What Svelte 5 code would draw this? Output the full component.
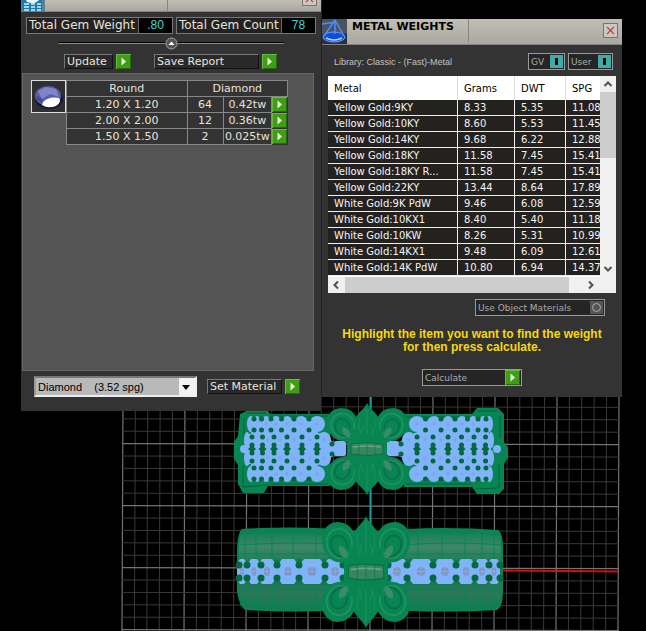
<script>
  const gems = [
    ['1.20 X 1.20', '64', '0.42tw'],
    ['2.00 X 2.00', '12', '0.36tw'],
    ['1.50 X 1.50', '2', '0.025tw']
  ];
  const metals = [
    ['Yellow Gold:9KY', '8.33', '5.35', '11.08'],
    ['Yellow Gold:10KY', '8.60', '5.53', '11.45'],
    ['Yellow Gold:14KY', '9.68', '6.22', '12.88'],
    ['Yellow Gold:18KY', '11.58', '7.45', '15.41'],
    ['Yellow Gold:18KY R...', '11.58', '7.45', '15.41'],
    ['Yellow Gold:22KY', '13.44', '8.64', '17.89'],
    ['White Gold:9K PdW', '9.46', '6.08', '12.59'],
    ['White Gold:10KX1', '8.40', '5.40', '11.18'],
    ['White Gold:10KW', '8.26', '5.31', '10.99'],
    ['White Gold:14KX1', '9.48', '6.09', '12.61'],
    ['White Gold:14K PdW', '10.80', '6.94', '14.37']
  ];

  // construction grid: five minor cells for each major one
  const cols = Array.from({ length: 41 }, (_, i) => ({ at: 123 + i * 12.4, major: i % 5 === 0 }));
  const rows = Array.from({ length: 20 }, (_, i) => ({ at: 394 + i * 12.4, major: i % 5 === 4 }));

  // pave ring: outer and inner stone rows, from the ring's edge to its centre
  const sides = [
    { outer: [251, 257, 266, 276, 287, 301, 317], inner: [247, 257, 268, 280, 294, 310, 324], tip: 340, end: 244 },
    { outer: [489, 483, 473, 462, 448, 434, 417], inner: [491, 480, 468, 455, 441, 425, 409], tip: 393, end: 497 }
  ];
  const rad = [4, 4, 5, 6, 6, 7, 8];
  const mids = (a) => a.slice(1).map((x, i) => (x + a[i]) / 2);

  // single row ring: centre and half width of each stone
  const band = [
    [242, 5], [254, 6], [267, 8], [288, 9], [312, 11], [335, 10],
    [397, 10], [421, 11], [445, 10], [466, 8], [482, 7], [494, 6]
  ];
  const prongs = [239, 247, 261, 277, 299, 325, 343, 388, 407, 433, 456, 475, 489, 500];
</script>

{#snippet arrow()}
  <span class="go"><svg width="15" height="15" viewBox="0 0 15 15" aria-hidden="true"><path d="M5.500 3.500 10 7.500 5.500 11.500z" fill="#e9ffd8" /></svg></span>
{/snippet}

{#snippet cross()}
  <svg width="11" height="11" viewBox="0 0 11 11" aria-hidden="true"><path d="M2 2l7 7M9 2l-7 7" stroke="#b04a42" stroke-width="1.2" /></svg>
{/snippet}

{#snippet fleur()}
  <g fill="#078553">
    <path d="M-20-8L-17-22L-11-32H11L17-22L20-8V8L17 22L11 32H-11L-17 22L-20 8Z" />
    {#each [1, -1] as sx}
      {#each [1, -1] as sy}
        <g transform="scale({sx} {sy})">
          <path d="M-4-4C-8-8-10-14-10-30C-13-38-19-41-27-41C-36-40-41-33-40-24C-39-15-32-8-24-8L-20-7Z" />
          <path d="M0-46C-3-39-10-37-13-28L-12-14L0-8Z" />
          <path d="M-13-20C-11-30-19-37-28-35C-37-32-38-22-32-15C-27-10-18-10-16-16" fill="none" stroke="#24945f" stroke-width="1.500" />
          <path d="M-17-20C-17-27-23-32-29-29C-33-26-33-20-29-16C-26-13-22-12-19-13" fill="none" stroke="#0b6e48" stroke-width="1.500" />
          <path d="M-17-11C-16-18-20-21-24-22C-26-17-23-12-17-11Z" fill="#3a8b67" />
          <path d="M-7-31Q-10-24-5-15M-3-24L-7-14M0-41V-15" fill="none" stroke="#1f925f" stroke-width=".8" />
        </g>
      {/each}
    {/each}
    <path d="M-16-5Q0-8 16-5V5Q0 8-16 5Z" fill="#35875f" stroke="#087148" stroke-width="1" />
    <path d="M-14-2Q0-4 14-2" fill="none" stroke="#8fb5a1" stroke-width="1.500" opacity=".6" /><path d="M0-6V6M-8-6V6M8-6V6" stroke="#1c6f4b" stroke-width=".7" />
  </g>
{/snippet}

<main>
  <svg class="viewport" width="646" height="631" viewBox="0 0 646 631" aria-label="Ring models">
    <defs>
      <linearGradient id="band" x1="0" y1="0" x2="0" y2="1">
        <stop offset="0" stop-color="#087e50" /><stop offset=".22" stop-color="#3f8768" /><stop offset=".5" stop-color="#12764e" />
        <stop offset=".8" stop-color="#2f775a" /><stop offset="1" stop-color="#087e50" />
      </linearGradient>
    </defs>
    {#each cols as c}
      <line x1={c.at} x2={c.at - 1} y1="394" y2="631" stroke={c.major ? '#747474' : '#393939'} stroke-width={c.major ? 1.2 : 1} />
    {/each}
    {#each rows as r}
      <line x1="122" x2="619" y1={r.at} y2={r.at + 1} stroke={r.major ? '#747474' : '#393939'} stroke-width={r.major ? 1.2 : 1} />
    {/each}
    <path d="M370.500 394V528" stroke="#119c9f" stroke-width="2" />
    <path d="M500 570.500L618 571.500" stroke="#d01010" stroke-width="2" />

    <path d="M240 414L249 410H267L270 414H330V486H268L264 493H243L238 484V465L234 459V442L238 436ZM404 414H472L477 408H498L504 414V442L508 448V458L504 464V489L499 494H477L472 487H404Z" fill="#078552" />
    <path d="M244 418V436M243 465V487L268 485M500 416V438M499 464V488L475 489M247 413H266M477 411H498M270 416H328M406 417H472M270 484H328M406 484H472" fill="none" stroke="#065f3e" stroke-width="1" />
    {#each sides as s}
      <g fill="#80b4fa">
        <path d="M{s.outer[0]} 420H{s.outer[6]}V432L{s.inner[6]} 436V462L{s.outer[6]} 466V478H{s.outer[0]}V464H{s.inner[0]}V434H{s.outer[0]}Z" />
        {#each rad as r, i}
          {#each [424, 474] as y}<ellipse cx={s.outer[i]} cy={y} rx={r} ry="8" />{/each}
          {#each [440, 458] as y}<ellipse cx={s.inner[i]} cy={y} rx={r - 1} ry="8" />{/each}
        {/each}
        <rect x={s.tip - 6} y="441" width="12" height="15" rx="2" />
        <path d="M{s.inner[6]} 436L{s.tip} 446V452L{s.inner[6]} 462Z" />
        <circle cx={s.end} cy="449" r="4" />
      </g>
      <g fill="#07683f">
        {#each mids(s.outer) as x}
          {#each [419, 430, 468, 479] as y}<circle cx={x} cy={y} r="2.500" />{/each}
        {/each}
        {#each mids(s.inner) as x}
          {#each [437, 445, 453, 461] as y}<circle cx={x} cy={y} r="2.500" />{/each}
          <path d="M{x - 4} 449L{x} 445L{x + 4} 449L{x} 453Z" />
        {/each}
        <circle cx={(s.tip + s.inner[6]) / 2} cy="444" r="2.500" />
        <circle cx={(s.tip + s.inner[6]) / 2} cy="454" r="2.500" />
      </g>
      <g stroke="#839bd0" stroke-width=".7">
        {#each s.outer.slice(2) as x}<path d="M{x - 2} 424H{x + 2}M{x} 422V426M{x - 2} 474H{x + 2}M{x} 472V476" />{/each}
        {#each s.inner.slice(2) as x}<path d="M{x - 2} 440H{x + 2}M{x} 438V442M{x - 2} 458H{x + 2}M{x} 456V460" />{/each}
      </g>
    {/each}
    <g transform="translate(367 449)">{@render fleur()}</g>

    <path d="M242 530Q306 526 366 533Q435 526 498 531Q502 535 502 548V591Q502 606 497 609Q435 613 366 607Q306 613 246 609Q240 606 238 591V551Q238 536 242 530Z" fill="url(#band)" stroke="#078552" stroke-width="2" />
    <g fill="none" stroke="#078552" stroke-width="1">
      <path d="M240 534Q306 530 366 536Q435 530 501 535M240 545Q306 541 340 545M400 545Q460 541 501 545M240 554H500M240 590H500M240 599H500M240 605Q306 609 366 604Q435 609 500 605" />
      {#each [245, 256, 272, 293, 316, 418, 442, 465, 482, 494] as x}<path d="M{x} 530V609" />{/each}
    </g>
    <path d="M239 561Q360 556 500 561V583Q360 588 239 583Z" fill="#0a7e50" />
    <g fill="#80b4fa">
      <path d="M239 567H345V576H239ZM388 567H500V576H388Z" />
      {#each band as [x, w]}
        <path d="M{x - w + 3} 559H{x + w - 3}L{x + w} 563V580L{x + w - 3} 584H{x - w + 3}L{x - w} 580V563Z" />
      {/each}
    </g>
    {#each band as [x, w]}
      <ellipse cx={x} cy="571.500" rx={w / 2.5} ry="4.500" fill="#8295bd" />
      <path d="M{x - w / 2.5} 571.500H{x + w / 2.5}M{x} 567V576" stroke="#80b4fa" stroke-width=".7" />
    {/each}
    {#each prongs as x}
      <circle cx={x} cy="565" r="3.500" fill="#07683f" /><circle cx={x} cy="578" r="3.500" fill="#07683f" />
    {/each}
    <g transform="translate(366 572) scale(1.1 1.22)">{@render fleur()}</g>
  </svg>

  <section class="window gem" aria-label="Gem report">
    <header class="bar">
      <svg width="24" height="12" viewBox="0 0 24 12" aria-hidden="true">
        <rect width="24" height="12" fill="#5c8198" /><path d="M0 0H21V11H2Z" fill="#167eaf" /><path d="M5 0H18Q14 5 6 2Z" fill="#e8f6ff" />
        <path d="M3 4H8M10 4H14M16 4H20M3 7H8M10 7H14M16 7H20M3 10H8M10 10H14M16 10H20" stroke="#d7f1ff" stroke-width="1.500" />
      </svg>
      <span class="blank"></span>
      <button class="close" aria-label="Close">{@render cross()}</button>
    </header>
    <div class="totals">
      <label class="total">Total Gem Weight <output>.80</output></label>
      <label class="total">Total Gem Count <output>78</output></label>
    </div>
    <div class="divider">
      <button aria-label="Collapse"><svg width="13" height="13" viewBox="0 0 13 13" aria-hidden="true"><circle cx="6.500" cy="6.500" r="5.500" fill="#555" stroke="#a0a0a0" /><path d="M3.500 8L6.500 4.500L9.500 8Z" fill="#fff" /></svg></button>
    </div>
    <div class="actions">
      <button class="action"><span class="face update">Update</span>{@render arrow()}</button>
      <button class="action"><span class="face report">Save Report</span>{@render arrow()}</button>
    </div>
    <div class="panel">
      <div class="thumb">
        <svg width="33" height="31" viewBox="0 0 33 31" aria-hidden="true">
          <ellipse cx="17" cy="18" rx="14" ry="10" fill="#17173a" /><ellipse cx="16" cy="15" rx="13" ry="10" fill="#5a60a8" />
          <path d="M6 10L14 6L24 8L27 16L18 13L10 18Z" fill="#7f85c8" /><path d="M4 14L10 18L13 24L5 19Z" fill="#454b92" /><path d="M11 21Q17 15 27 17Q30 21 24 25Q16 28 10 24Z" fill="#fff" />
        </svg>
      </div>
      <table class="stones">
        <thead><tr><th>Round</th><th colspan="3">Diamond</th></tr></thead>
        <tbody>
          {#each gems as [size, count, weight]}
            <tr><td>{size}</td><td>{count}</td><td>{weight}</td><td class="cell-go"><button aria-label="Select {size}">{@render arrow()}</button></td></tr>
          {/each}
        </tbody>
      </table>
    </div>
    <div class="material">
      <select aria-label="Material"><option>Diamond &nbsp;&nbsp; (3.52 spg)</option></select>
      <button class="action"><span class="face set">Set Material</span>{@render arrow()}</button>
    </div>
  </section>

  <section class="window metal" aria-label="Metal weights">
    <header class="bar tall">
      <svg width="25" height="25" viewBox="0 0 25 25" aria-hidden="true">
        <rect width="25" height="25" fill="#4b535f" /><path d="M0 16Q12 10 25 15V25H0Z" fill="#292f3d" /><ellipse cx="12" cy="18" rx="11" ry="5" fill="#124be0" stroke="#6fa6ff" />
        <path d="M0 5L14 3M13 1L2 17M13 1L22 17M13 1V15" fill="none" stroke="#4d8cff" stroke-width="1.500" /><path d="M4 19Q12 23 20 19" fill="none" stroke="#bcd8ff" stroke-width="1.500" />
      </svg>
      <h1>METAL WEIGHTS</h1>
      <button class="close" aria-label="Close">{@render cross()}</button>
    </header>
    <div class="library">
      <p>Library: Classic - (Fast)-Metal</p>
      <label class="toggle">GV <input type="checkbox" class="on" checked /></label>
      <label class="toggle">User <input type="checkbox" class="on" checked /></label>
    </div>
    <div class="list">
      <div class="table-clip">
        <table class="weights">
          <colgroup><col class="c1" /><col class="c2" /><col class="c3" /><col class="c4" /></colgroup>
          <thead><tr><th>Metal</th><th>Grams</th><th>DWT</th><th>SPG</th></tr></thead>
          <tbody>
            {#each metals as row}
              <tr>{#each row as cell}<td>{cell}</td>{/each}</tr>
            {/each}
          </tbody>
        </table>
      </div>
      <div class="vscroll">
        <button aria-label="Scroll up"><svg width="16" height="16" viewBox="0 0 16 16"><path d="M4.500 10L8 6.500L11.500 10" /></svg></button>
        <i></i>
        <button aria-label="Scroll down"><svg width="16" height="16" viewBox="0 0 16 16"><path d="M4.500 6L8 9.500L11.500 6" /></svg></button>
      </div>
      <div class="hscroll">
        <button aria-label="Scroll left"><svg width="16" height="16" viewBox="0 0 16 16"><path d="M10 4.500L6.500 8L10 11.500" /></svg></button>
        <i></i>
        <button aria-label="Scroll right"><svg width="16" height="16" viewBox="0 0 16 16"><path d="M6 4.500L9.500 8L6 11.500" /></svg></button>
      </div>
    </div>
    <label class="toggle objects">Use Object Materials <input type="checkbox" class="off" /></label>
    <p class="hint">Highlight the item you want to find the weight for then press calculate.</p>
    <button class="calculate"><span>Calculate</span>{@render arrow()}</button>
  </section>
</main>

<style>
  :global(body) { margin: 0; background: #000; }
  * { box-sizing: border-box; }
  main { position: relative; min-height: 100vh; overflow: hidden; background: #000; font: 12px/14px "DejaVu Sans", sans-serif; color: #e8e4dc; }
  button { font: inherit; color: inherit; border: 0; padding: 0; background: none; display: flex; }
  svg { display: block; flex: none; }
  p, h1 { margin: 0; }
  .viewport { position: absolute; left: 0; top: 0; }
  .window { position: absolute; background: #333; }
  .gem { left: 21px; top: 0; width: 301px; padding-bottom: 14px; border-right: 1px solid #222; }
  .metal { left: 322px; top: 19px; width: 300px; padding-bottom: 11px; }
  .bar { display: flex; height: 12px; background: linear-gradient(#c2beb6, #aaa8a1); border-bottom: 1px solid #85837e; }
  .blank { width: 123px; border-right: 1px solid #858580; }
  .close { margin-left: auto; width: 15px; height: 15px; border: 1px solid #77746f; background: #ccc8c0; align-items: center; justify-content: center; }
  .gem .close { margin-top: -9px; margin-right: 4px; }
  .tall { height: 26px; }
  .tall .close { margin: 4px 4px 0 auto; }
  h1 { width: 122px; height: 23px; padding-left: 5px; border-right: 1px solid #858580; font: bold 11px/15px "DejaVu Sans", sans-serif; color: #000; white-space: nowrap; }
  .totals { display: flex; gap: 3px; padding: 5px 5px 0; }
  .total { display: flex; justify-content: space-between; height: 17px; padding-left: 2px; border: 1px solid #777; background: #222; line-height: 15px; white-space: nowrap; }
  .total:first-child { width: 147px; }
  .total:last-child { width: 140px; }
  output { width: 34px; background: #000; color: #45d6d0; text-align: center; border-left: 1px solid #666; font: 12px/15px "Liberation Sans", sans-serif; }
  .divider { display: flex; justify-content: center; height: 13px; margin: 3px 37px 0; background: linear-gradient(#000, #000) 0 5px / 100% 1px no-repeat, linear-gradient(#888, #888) 0 6px / 100% 1px no-repeat; }
  .actions { display: flex; gap: 23px; padding: 4px 0 0 43px; }
  .action { gap: 3px; font-size: 11px; line-height: 14px; text-align: left; }
  .face { height: 15px; padding-left: 2px; border: 1px solid #111; border-top-color: #777; border-left-color: #777; background: #292929; white-space: nowrap; }
  .update { width: 49px; }
  .report { width: 105px; }
  .set { width: 75px; }
  .go { display: block; width: 15px; height: 15px; flex: none; background: #419d17; box-shadow: inset 1px 1px #67bb42, inset -1px -1px #28680e; }
  .panel { display: flex; align-items: flex-start; height: 298px; margin: 4px 7px 0 1px; padding: 6px 0 0 8px; border: 1px solid #666; background: #545454; }
  .thumb { height: 33px; border: 1px solid #ddd; background: #303030; }
  .stones { width: 222px; border-collapse: collapse; font-size: 11px; line-height: 14px; text-align: center; background: #333; }
  .stones th, .stones td { height: 16px; padding: 0; border: 1px solid #888; font-weight: normal; white-space: nowrap; }
  .stones th:first-child { width: 120px; }
  .stones td:nth-child(2) { width: 36px; }
  .stones td:nth-child(3) { width: 48px; }
  .stones .cell-go { width: 16px; border: 0; }
  .material { position: relative; display: flex; align-items: center; gap: 10px; padding: 5px 0 0 13px; }
  .material::after { content: ''; position: absolute; left: 161px; top: 14px; border: 4px solid transparent; border-top: 5px solid #000; border-bottom: 0; pointer-events: none; }
  select { appearance: none; width: 163px; height: 21px; padding: 0 2px; border: 2px solid #eee; border-top-color: #777; border-left-color: #999; border-radius: 0; color: #000; font: 11px/16px "Liberation Sans", sans-serif;
    background: linear-gradient(90deg, #b9b9b9 0 143px, #f2f2f2 143px); }
  .library { display: flex; align-items: center; gap: 3px; padding: 8px 9px 0 12px; }
  .library p { margin-right: auto; font: 9px/14px "Liberation Sans", sans-serif; color: #c2c2c2; white-space: nowrap; }
  .toggle { display: flex; align-items: center; justify-content: space-between; height: 17px; padding: 0 1px 0 2px; border: 1px solid #999; background: #252525; color: #aaa; font-size: 9px; white-space: nowrap; }
  .library .toggle { width: 37px; }
  .library .toggle:last-child { width: 45px; }
  input { appearance: none; display: flex; align-items: center; justify-content: center; width: 13px; height: 13px; margin: 0; }
  .on { background: #40aaa6; }
  .on::before { content: ''; width: 3px; height: 7px; background: #000; }
  .off { background: #555; }
  .off::before { content: ''; width: 7px; height: 7px; border: 1px solid #aaa; border-radius: 50%; }
  .list { display: grid; grid-template-columns: 1fr 16px; grid-template-rows: 201px 16px; margin: 6px 6px 0; background: #eee; }
  .table-clip { overflow: hidden; background: #fff; }
  .weights { width: 297px; table-layout: fixed; border-collapse: separate; border-spacing: 0; font-size: 10px; text-align: left; }
  .c1 { width: 130px; } .c2 { width: 57px; } .c3 { width: 51px; } .c4 { width: 59px; }
  .weights th { height: 24px; padding: 2px 0 0 6px; background: #fff; color: #000; font-weight: normal; border-right: 1px solid #ddd; }
  .weights td { height: 16px; padding: 1px 0 0 6px; line-height: 14px; color: #f4f4f4; background: #24221f; border-right: 1px solid #eee; border-bottom: 1px solid #eee; white-space: nowrap; }
  .vscroll, .hscroll { display: flex; background: #f0f0f0; }
  .vscroll { flex-direction: column; }
  .hscroll { grid-column: 1 / -1; padding-right: 17px; }
  .vscroll i { height: 66px; margin-bottom: auto; background: #cdcdcd; }
  .hscroll i { width: 224px; margin: 0 auto 0 1px; background: #cdcdcd; }
  .vscroll path, .hscroll path { fill: none; stroke: #505050; stroke-width: 2; }
  .objects { width: 130px; margin: 6px 17px 0 auto; }
  .hint { margin: 12px 16px 0; color: #f5d90a; font: bold 12px/13px "Liberation Sans", sans-serif; text-align: center; }
  .calculate { width: 100px; height: 17px; margin: 15px auto 0 100px; padding: 0 1px 0 2px; align-items: center; justify-content: space-between; border: 1px solid #999; background: #252525; color: #aaa; font-size: 9px; }
</style>
